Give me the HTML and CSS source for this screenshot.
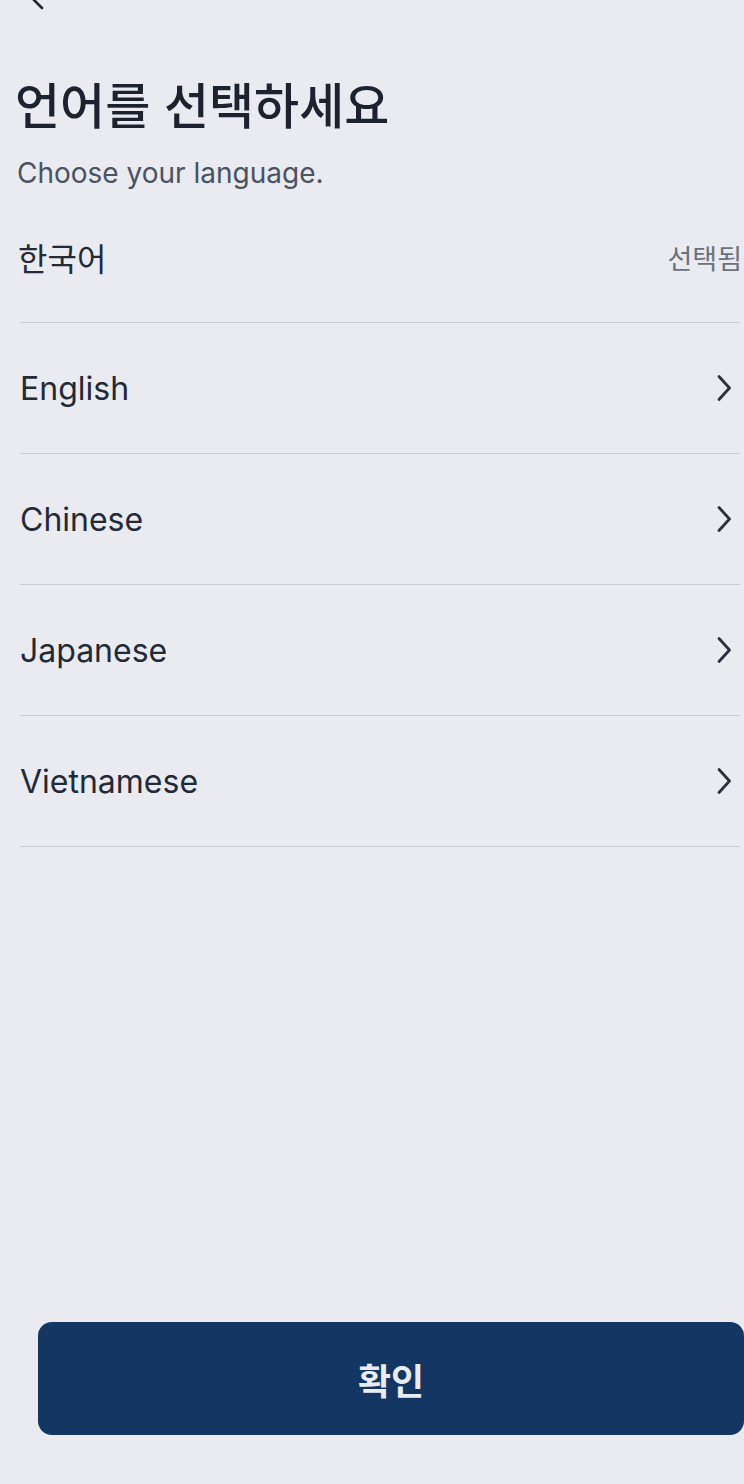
FILE: index.html
```html
<!DOCTYPE html>
<html lang="ko">
<head>
<meta charset="utf-8">
<title>언어를 선택하세요</title>
<link rel="stylesheet" href="styles.css">
</head>
<body>
<div class="screen">
  <header class="topbar">
    <svg class="back" width="30" height="30" viewBox="0 0 30 30" fill="none" stroke="#1f2430" stroke-width="2.6" stroke-linecap="round" stroke-linejoin="round"><path d="M20 3 L8 15 L20 27"/></svg>
  </header>
  <h1 class="title">언어를 선택하세요</h1>
  <p class="subtitle">Choose your language.</p>
  <ul class="list">
    <li class="row">
      <span class="label ko">한국어</span>
      <span class="selected">선택됨</span>
    </li>
    <li class="row">
      <span class="label">English</span>
      <svg class="chev" width="20" height="30" viewBox="0 0 20 30" fill="none" stroke="#2a303c" stroke-width="2.8" stroke-linecap="round" stroke-linejoin="round"><path d="M5 3.5 L15.5 15 L5 26.5"/></svg>
    </li>
    <li class="row">
      <span class="label">Chinese</span>
      <svg class="chev" width="20" height="30" viewBox="0 0 20 30" fill="none" stroke="#2a303c" stroke-width="2.8" stroke-linecap="round" stroke-linejoin="round"><path d="M5 3.5 L15.5 15 L5 26.5"/></svg>
    </li>
    <li class="row">
      <span class="label">Japanese</span>
      <svg class="chev" width="20" height="30" viewBox="0 0 20 30" fill="none" stroke="#2a303c" stroke-width="2.8" stroke-linecap="round" stroke-linejoin="round"><path d="M5 3.5 L15.5 15 L5 26.5"/></svg>
    </li>
    <li class="row">
      <span class="label">Vietnamese</span>
      <svg class="chev" width="20" height="30" viewBox="0 0 20 30" fill="none" stroke="#2a303c" stroke-width="2.8" stroke-linecap="round" stroke-linejoin="round"><path d="M5 3.5 L15.5 15 L5 26.5"/></svg>
    </li>
  </ul>
  <div class="spacer"></div>
  <button class="confirm" type="button">확인</button>
</div>
</body>
</html>
```

FILE: styles.css
```css
html, body {
  margin: 0;
  padding: 0;
  background: #e9ebf0;
}
body {
  font-family: "Inter", "Noto Sans CJK KR", sans-serif;
  color: #1f2430;
}
.screen {
  display: flex;
  flex-direction: column;
  height: 1484px;
  box-sizing: border-box;
  padding-bottom: 49px;
  overflow: hidden;
}
.topbar {
  height: 64px;
  padding-left: 22px;
}
.back {
  display: block;
  margin-top: -19px;
}
.title {
  margin: 8px 0 0 15px;
  font-family: "Noto Sans CJK KR", sans-serif;
  font-size: 49px;
  font-weight: 500;
  line-height: 62px;
  letter-spacing: 0;
  color: #1c2230;
}
.subtitle {
  margin: 20px 0 0 17px;
  font-size: 28px;
  line-height: 38px;
  color: #4b5261;
}
.list {
  list-style: none;
  margin: 0;
  padding: 0 4px 0 20px;
}
.row {
  display: flex;
  align-items: center;
  justify-content: space-between;
  height: 130px;
  border-bottom: 1.5px solid #c9ccd3;
}
.label {
  font-size: 32px;
  color: #232937;
}
.label.ko {
  font-family: "Noto Sans CJK KR", sans-serif;
  font-weight: 400;
  font-size: 32px;
  margin-left: -2px;
}
.selected {
  font-family: "Noto Sans CJK KR", sans-serif;
  font-size: 27px;
  color: #6b717d;
  margin-right: -2px;
}
.chev {
  margin-right: 6px;
}
.spacer {
  flex: 1;
}
.confirm {
  margin: 0 0 0 38px;
  height: 113px;
  border: none;
  border-radius: 14px;
  background: #133662;
  color: #e8ebf1;
  font-family: "Noto Sans CJK KR", sans-serif;
  font-size: 36px;
  font-weight: 700;
  padding: 0;
}
```
